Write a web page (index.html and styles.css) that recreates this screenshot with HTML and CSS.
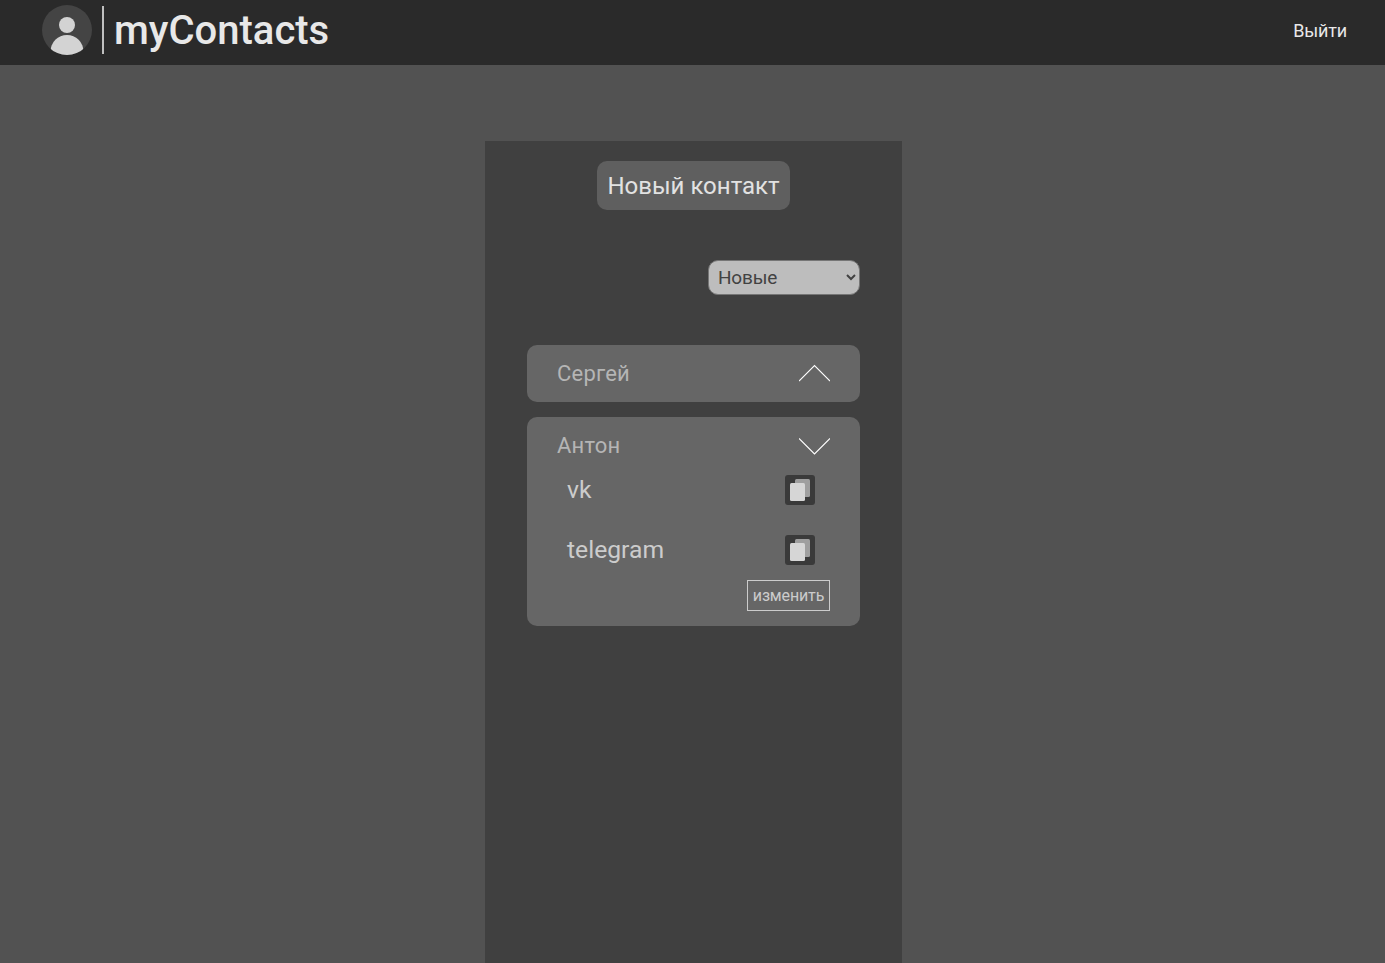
FILE: index.html
```html
<!DOCTYPE html>
<html lang="ru">
<head>
<meta charset="utf-8">
<title>myContacts</title>
<link rel="stylesheet" href="styles.css">
</head>
<body>
<header class="header">
  <div class="brand">
    <svg class="avatar" viewBox="0 0 50 50">
      <defs><clipPath id="disc"><circle cx="25" cy="25" r="25"/></clipPath></defs>
      <circle cx="25" cy="25" r="25" fill="#444"/>
      <g clip-path="url(#disc)" fill="#d3d3d3">
        <circle cx="25" cy="25" r="0"/>
        <circle cx="25" cy="20" r="8"/>
        <circle cx="25" cy="51" r="16.500" transform="translate(0 -4.500)"/>
      </g>
    </svg>
    <span class="divider"></span>
    <h1 class="title">myContacts</h1>
  </div>
  <a class="logout">Выйти</a>
</header>
<main class="panel">
  <button class="new-contact">Новый контакт</button>
  <select class="sort"><option>Новые</option><option>Старые</option></select>
  <section class="card">
    <div class="card-head">
      <span class="name">Сергей</span>
      <svg class="chevron" viewBox="0 0 31 19"><path d="M0 17 15.500 1.500 31 17"/></svg>
    </div>
  </section>
  <section class="card">
    <div class="card-head">
      <span class="name">Антон</span>
      <svg class="chevron" viewBox="0 0 31 19"><path d="M0 2.500 15.500 18 31 2.500"/></svg>
    </div>
    <ul class="links">
      <li class="link"><span>vk</span>
        <svg class="copy" viewBox="0 0 30 30"><rect width="30" height="30" rx="3" fill="#3a3a3a"/><rect x="10" y="4" width="15" height="18" rx="1.500" fill="#9f9f9f"/><rect x="5" y="8" width="15" height="18" rx="1.500" fill="#d6d6d6"/></svg>
      </li>
      <li class="link"><span>telegram</span>
        <svg class="copy" viewBox="0 0 30 30"><rect width="30" height="30" rx="3" fill="#3a3a3a"/><rect x="10" y="4" width="15" height="18" rx="1.500" fill="#9f9f9f"/><rect x="5" y="8" width="15" height="18" rx="1.500" fill="#d6d6d6"/></svg>
      </li>
    </ul>
    <button class="edit">изменить</button>
  </section>
</main>
</body>
</html>
```
FILE: styles.css
```css
* { box-sizing: border-box; }
body {
  margin: 0;
  min-height: 100vh;
  display: flex;
  flex-direction: column;
  align-items: center;
  background: #525252;
  font-family: Roboto, sans-serif;
}
.header {
  width: 100%;
  height: 65px;
  padding: 5px 38px 10px 42px;
  display: flex;
  justify-content: space-between;
  align-items: center;
  background: #2a2a2a;
}
.brand { display: flex; align-items: center; gap: 10px; }
.avatar { width: 50px; height: 50px; }
.divider { width: 2px; height: 48px; background: #c0c0c0; }
.title { margin: 0; padding-top: 2px; font-size: 40px; line-height: 48px; font-weight: 500; color: #e8e8e8; }
.logout { padding-top: 2px; font-size: 18px; line-height: 22px; letter-spacing: -0.15px; color: #e8e8e8; }
.panel {
  width: 417px;
  margin: 76px 0 0 2px;
  padding: 20px 42px;
  flex: 1;
  display: flex;
  flex-direction: column;
  background: #404040;
}
.new-contact {
  align-self: center;
  width: 193px;
  height: 49px;
  padding: 0;
  border: 0;
  border-radius: 10px;
  background: #5f5f5f;
  color: #e2e2e2;
  font: 400 24px Roboto, sans-serif;
  white-space: nowrap;
}
.sort {
  align-self: flex-end;
  width: 152px;
  height: 35px;
  margin: 50px 0;
  padding: 0 0 0 5px;
  border: 1px solid #767676;
  border-radius: 10px;
  background: #bdbdbd;
  color: #424242;
  font: 400 19px Roboto, sans-serif;
  letter-spacing: -0.2px;
}
.card {
  display: flex;
  flex-direction: column;
  margin-bottom: 15px;
  padding: 15px 30px;
  border-radius: 10px;
  background: #666;
}
.card-head { display: flex; justify-content: space-between; align-items: center; height: 27px; }
.name { font-size: 22px; line-height: 27px; letter-spacing: 0.2px; color: #b5b5b5; }
.chevron { width: 31px; height: 19px; fill: none; stroke: #fff; stroke-width: 1.100; }
.links { margin: 16px 15px 15px 10px; padding: 0; list-style: none; display: grid; gap: 30px; }
.link { display: flex; justify-content: space-between; align-items: center; height: 30px; font-size: 24.7px; line-height: 30px; color: #ccc; }
.copy { width: 30px; height: 30px; }
.edit {
  align-self: flex-end;
  width: 83px;
  height: 31px;
  padding: 0;
  border: 1px solid #ccc;
  background: transparent;
  color: #ccc;
  font: 400 16px Roboto, sans-serif;
  letter-spacing: -0.15px;
}
```
